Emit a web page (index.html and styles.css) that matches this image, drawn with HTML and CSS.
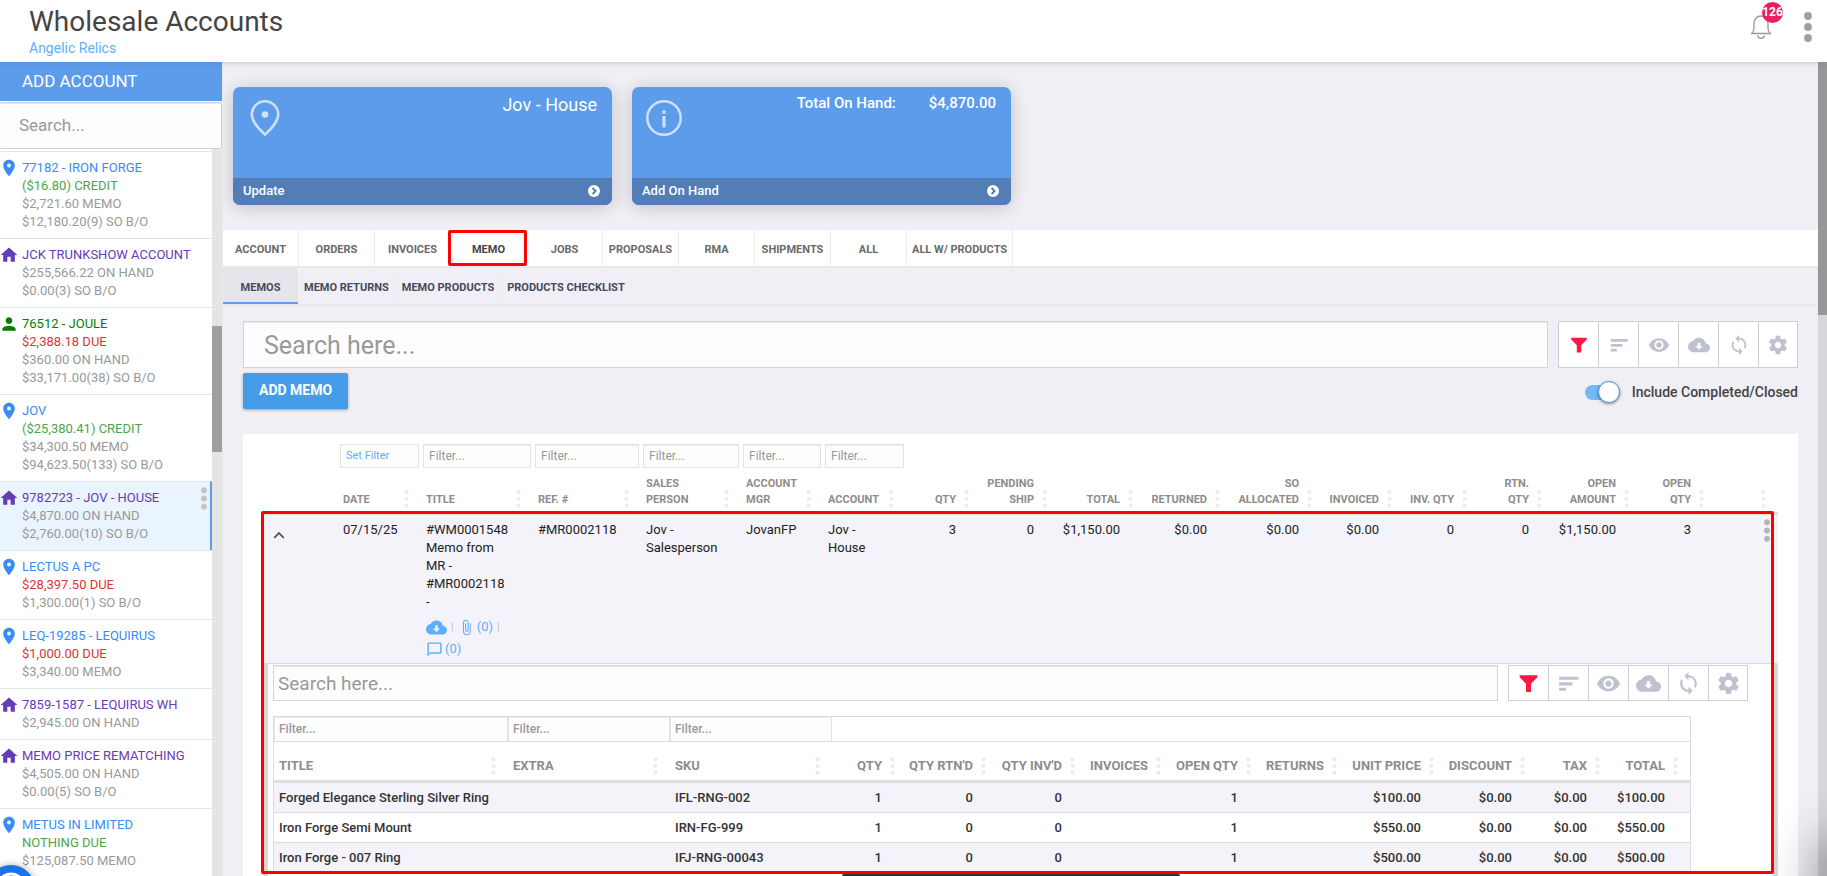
FILE: index.html
```html
<!DOCTYPE html>
<html lang="en">
<head>
<meta charset="utf-8">
<title>Wholesale Accounts</title>
<link rel="stylesheet" href="styles.css">
</head>
<body>
<svg class="sprite" aria-hidden="true">
  <symbol id="place" viewBox="0 0 24 24"><path fill-rule="evenodd" d="M12 2C8.13 2 5 5.13 5 9c0 5.25 7 13 7 13s7-7.75 7-13c0-3.87-3.13-7-7-7zm0 9.3a2.3 2.3 0 1 1 0-4.600 2.300 2.300 0 0 1 0 4.600z"/></symbol>
  <symbol id="home" viewBox="0 0 24 24"><path d="M10 20v-6h4v6h5v-8h3L12 3 2 12h3v8z"/></symbol>
  <symbol id="person" viewBox="0 0 24 24"><path d="M12 12c2.210 0 4-1.790 4-4s-1.790-4-4-4-4 1.790-4 4 1.790 4 4 4zm0 2c-2.670 0-8 1.340-8 4v2h16v-2c0-2.660-5.330-4-8-4z"/></symbol>
  <symbol id="cloud" viewBox="0 0 24 24"><path fill-rule="evenodd" d="M19.350 10.040C18.670 6.590 15.640 4 12 4 9.110 4 6.600 5.640 5.350 8.040 2.340 8.360 0 10.910 0 14c0 3.310 2.690 6 6 6h13c2.760 0 5-2.240 5-5 0-2.640-2.050-4.780-4.650-4.960zM16 13l-4 4-4-4h2.600V9.500h2.800V13z"/></symbol>
  <symbol id="eye" viewBox="0 0 24 24"><path fill-rule="evenodd" d="M12 4.500C7 4.500 2.730 7.610 1 12c1.730 4.390 6 7.500 11 7.500s9.270-3.110 11-7.500c-1.730-4.390-6-7.500-11-7.500zM12 17c-2.760 0-5-2.240-5-5s2.240-5 5-5 5 2.240 5 5-2.240 5-5 5zm0-8c-1.660 0-3 1.340-3 3s1.340 3 3 3 3-1.340 3-3-1.340-3-3-3z"/></symbol>
  <symbol id="sync" viewBox="0 0 24 24"><path d="M12 4V1L8 5l4 4V6c3.310 0 6 2.690 6 6 0 1.010-.25 1.970-.7 2.800l1.460 1.460C19.540 15.030 20 13.570 20 12c0-4.420-3.580-8-8-8zm0 14c-3.310 0-6-2.690-6-6 0-1.010.25-1.970.7-2.800L5.240 7.740C4.460 8.970 4 10.430 4 12c0 4.420 3.580 8 8 8v3l4-4-4-4v3z"/></symbol>
  <symbol id="gear" viewBox="0 0 24 24"><path fill-rule="evenodd" d="M19.430 12.980c.04-.32.07-.64.07-.98s-.03-.66-.07-.98l2.110-1.650c.19-.15.24-.42.12-.64l-2-3.460c-.12-.22-.39-.3-.61-.22l-2.490 1c-.52-.4-1.080-.73-1.690-.98l-.38-2.650C14.460 2.180 14.250 2 14 2h-4c-.25 0-.46.18-.49.42l-.38 2.650c-.61.25-1.170.59-1.690.98l-2.490-1c-.23-.09-.49 0-.61.22l-2 3.460c-.13.22-.07.49.12.64l2.110 1.650c-.04.32-.07.65-.07.98s.03.66.07.98l-2.110 1.650c-.19.15-.24.42-.12.64l2 3.460c.12.22.39.3.61.22l2.490-1c.52.4 1.080.73 1.690.98l.38 2.650c.03.24.24.42.49.42h4c.25 0 .46-.18.49-.42l.38-2.650c.61-.25 1.170-.59 1.690-.98l2.490 1c.23.09.49 0 .61-.22l2-3.460c.12-.22.07-.49-.12-.64l-2.110-1.650zM12 15.500c-1.930 0-3.500-1.570-3.500-3.500s1.570-3.500 3.500-3.500 3.500 1.570 3.500 3.500-1.570 3.500-3.500 3.500z"/></symbol>
  <symbol id="funnel" viewBox="0 0 24 24"><path d="M3.500 4h17v2L14.400 12.200V20.200H9.600v-8L3.500 6z"/></symbol>
  <symbol id="sort" viewBox="0 0 24 24"><path d="M3 5.500h18.500v3H3zM3 10.800h12.700v3H3zM3 16h6.500v3H3z"/></symbol>
  <symbol id="clip" viewBox="0 0 24 24"><path d="M16.500 6v11.500c0 2.210-1.790 4-4 4s-4-1.790-4-4V5c0-1.380 1.120-2.500 2.500-2.500s2.500 1.120 2.500 2.500v10.500c0 .55-.45 1-1 1s-1-.45-1-1V6H10v9.500c0 1.380 1.120 2.500 2.500 2.500s2.500-1.120 2.500-2.500V5c0-2.210-1.790-4-4-4S7 2.790 7 5v12.500c0 3.040 2.460 5.500 5.500 5.500s5.500-2.460 5.500-5.500V6h-1.500z"/></symbol>
  <symbol id="chat" viewBox="0 0 24 24"><path fill-rule="evenodd" d="M20 2H4c-1.100 0-2 .9-2 2v18l4-4h14c1.100 0 2-.9 2-2V4c0-1.100-.9-2-2-2zm0 14H6l-2 2V4h16v12z"/></symbol>
  <symbol id="grip" viewBox="0 0 5 18"><circle cx="2.500" cy="2.300" r="2.100"/><circle cx="2.500" cy="9" r="2.100"/><circle cx="2.500" cy="15.700" r="2.100"/></symbol>
  <symbol id="kebab" viewBox="0 0 8 30"><circle cx="4" cy="4" r="3.900"/><circle cx="4" cy="15" r="3.900"/><circle cx="4" cy="26" r="3.900"/></symbol>
  <symbol id="next" viewBox="0 0 12 12"><circle cx="6" cy="6" r="6" fill="#fff"/><path d="M4.600 3l3 3-3 3" fill="none" stroke="#527db5" stroke-width="1.900"/></symbol>
</svg>

<header class="topbar">
  <div>
    <h1 class="page-title">Wholesale Accounts</h1>
    <a class="company" href="#">Angelic Relics</a>
  </div>
  <div class="top-actions">
    <button class="bell" aria-label="Notifications">
      <svg width="22" height="26" viewBox="0 0 22 26" stroke="#999" stroke-width="1.300"><path d="M1 19.500h20M2 19c1.600-1.200 2-2.500 2-5V9.500C4 5 7 2 11 2s7 3 7 7.500V14c0 2.500.4 3.800 2 5M7.500 21.500c.5 1.800 1.800 2.800 3.500 2.800s3-1 3.500-2.800"/></svg>
      <span class="badge">126</span>
    </button>
    <button class="menu" aria-label="Menu"><svg width="8" height="30"><use href="#kebab"/></svg></button>
  </div>
</header>

<div class="layout">
  <aside class="sidebar">
    <button class="add-account">ADD ACCOUNT</button>
    <input class="account-search" type="text" placeholder="Search..." aria-label="Search accounts">
    <div class="scroller">
      <ul class="accounts">
        <li class="loc"><svg><use href="#place"/></svg><div><a href="#">77182 - IRON FORGE</a><span class="ok">($16.80) CREDIT</span><span>$2,721.60 MEMO</span><span>$12,180.20(9) SO B/O</span></div></li>
        <li class="house"><svg><use href="#home"/></svg><div><a href="#">JCK TRUNKSHOW ACCOUNT</a><span>$255,566.22 ON HAND</span><span>$0.00(3) SO B/O</span></div></li>
        <li class="user"><svg><use href="#person"/></svg><div><a href="#">76512 - JOULE</a><span class="due">$2,388.18 DUE</span><span>$360.00 ON HAND</span><span>$33,171.00(38) SO B/O</span></div></li>
        <li class="loc"><svg><use href="#place"/></svg><div><a href="#">JOV</a><span class="ok">($25,380.41) CREDIT</span><span>$34,300.50 MEMO</span><span>$94,623.50(133) SO B/O</span></div></li>
        <li class="house selected"><svg><use href="#home"/></svg><div><a href="#">9782723 - JOV - HOUSE</a><span>$4,870.00 ON HAND</span><span>$2,760.00(10) SO B/O</span></div><button class="item-menu" aria-label="Account menu"><svg width="6" height="23"><use href="#kebab"/></svg></button></li>
        <li class="loc"><svg><use href="#place"/></svg><div><a href="#">LECTUS A PC</a><span class="due">$28,397.50 DUE</span><span>$1,300.00(1) SO B/O</span></div></li>
        <li class="loc"><svg><use href="#place"/></svg><div><a href="#">LEQ-19285 - LEQUIRUS</a><span class="due">$1,000.00 DUE</span><span>$3,340.00 MEMO</span></div></li>
        <li class="house"><svg><use href="#home"/></svg><div><a href="#">7859-1587 - LEQUIRUS WH</a><span>$2,945.00 ON HAND</span></div></li>
        <li class="house"><svg><use href="#home"/></svg><div><a href="#">MEMO PRICE REMATCHING</a><span>$4,505.00 ON HAND</span><span>$0.00(5) SO B/O</span></div></li>
        <li class="loc"><svg><use href="#place"/></svg><div><a href="#">METUS IN LIMITED</a><span class="ok">NOTHING DUE</span><span>$125,087.50 MEMO</span></div></li>
      </ul>
      <div class="side-track"><div class="side-thumb"></div></div>
    </div>
  </aside>

  <main class="main">
    <section class="cards">
      <article class="card">
        <div class="card-body">
          <svg width="36" height="36" viewBox="0 0 36 36" stroke="#cfe1f9" stroke-width="2.500"><path d="M18 34.600C12 29 4.800 22 4.800 14.500a13.200 13.200 0 0 1 26.400 0C31.200 22 24 29 18 34.600z"/><circle cx="18" cy="14.500" r="3.300" fill="#cfe1f9" stroke="none"/></svg>
          <strong class="card-name">Jov - House</strong>
        </div>
        <button class="card-foot">Update<svg width="12" height="12"><use href="#next"/></svg></button>
      </article>
      <article class="card">
        <div class="card-body">
          <svg width="36" height="36" viewBox="0 0 36 36" stroke="#cfe1f9" stroke-width="2.500"><circle cx="18" cy="18" r="16.700"/><path d="M18 10.500v3.200M18 16v11.500" stroke-width="3.200"/></svg>
          <div class="card-total"><span>Total On Hand:</span><span>$4,870.00</span></div>
        </div>
        <button class="card-foot">Add On Hand<svg width="12" height="12"><use href="#next"/></svg></button>
      </article>
    </section>

    <nav class="tabs">
      <a href="#">ACCOUNT</a><a href="#">ORDERS</a><a href="#">INVOICES</a><a href="#" class="active">MEMO</a><a href="#">JOBS</a><a href="#">PROPOSALS</a><a href="#">RMA</a><a href="#">SHIPMENTS</a><a href="#">ALL</a><a href="#">ALL W/ PRODUCTS</a>
    </nav>
    <nav class="subtabs">
      <a href="#" class="active">MEMOS</a><a href="#">MEMO RETURNS</a><a href="#">MEMO PRODUCTS</a><a href="#">PRODUCTS CHECKLIST</a>
    </nav>

    <section class="content">
      <div class="search-row">
        <input class="search" type="text" placeholder="Search here..." aria-label="Search memos">
        <div class="tools">
          <button class="hot" aria-label="Filter"><svg><use href="#funnel"/></svg></button><button aria-label="Sort"><svg><use href="#sort"/></svg></button><button aria-label="Columns"><svg><use href="#eye"/></svg></button><button aria-label="Download"><svg><use href="#cloud"/></svg></button><button aria-label="Refresh"><svg><use href="#sync"/></svg></button><button aria-label="Settings"><svg><use href="#gear"/></svg></button>
        </div>
      </div>
      <div class="action-row">
        <button class="add-memo">ADD MEMO</button>
        <label class="toggle"><input type="checkbox" role="switch" checked><span>Include Completed/Closed</span></label>
      </div>

      <div class="sheet">
        <table class="memos">
          <colgroup><col class="w75"><col class="w83"><col class="w112"><col class="w108"><col class="w100"><col class="w82"><col class="w83"><col class="w75"><col class="w78"><col class="w86"><col class="w87"><col class="w92"><col class="w80"><col class="w75"><col class="w75"><col class="w87"><col class="w75"><col class="w62"></colgroup>
          <thead>
            <tr class="filters">
              <td></td><td><button class="set-filter">Set Filter</button></td>
              <td><input type="text" placeholder="Filter..." aria-label="Filter title"></td>
              <td><input type="text" placeholder="Filter..." aria-label="Filter reference"></td>
              <td><input type="text" placeholder="Filter..." aria-label="Filter sales person"></td>
              <td><input type="text" placeholder="Filter..." aria-label="Filter account manager"></td>
              <td><input type="text" placeholder="Filter..." aria-label="Filter account"></td>
              <td colspan="11"></td>
            </tr>
            <tr class="heads">
              <th></th>
              <th><div><span>DATE</span><svg><use href="#grip"/></svg></div></th>
              <th><div><span>TITLE</span><svg><use href="#grip"/></svg></div></th>
              <th><div><span>REF. #</span><svg><use href="#grip"/></svg></div></th>
              <th><div><span>SALES<br>PERSON</span><svg><use href="#grip"/></svg></div></th>
              <th><div><span>ACCOUNT<br>MGR</span><svg><use href="#grip"/></svg></div></th>
              <th><div><span>ACCOUNT</span><svg><use href="#grip"/></svg></div></th>
              <th class="num"><div><span>QTY</span><svg><use href="#grip"/></svg></div></th>
              <th class="num"><div><span>PENDING<br>SHIP</span><svg><use href="#grip"/></svg></div></th>
              <th class="num"><div><span>TOTAL</span><svg><use href="#grip"/></svg></div></th>
              <th class="num"><div><span>RETURNED</span><svg><use href="#grip"/></svg></div></th>
              <th class="num"><div><span>SO<br>ALLOCATED</span><svg><use href="#grip"/></svg></div></th>
              <th class="num"><div><span>INVOICED</span><svg><use href="#grip"/></svg></div></th>
              <th class="num"><div><span>INV. QTY</span><svg><use href="#grip"/></svg></div></th>
              <th class="num"><div><span>RTN.<br>QTY</span><svg><use href="#grip"/></svg></div></th>
              <th class="num"><div><span>OPEN<br>AMOUNT</span><svg><use href="#grip"/></svg></div></th>
              <th class="num"><div><span>OPEN<br>QTY</span><svg><use href="#grip"/></svg></div></th>
              <th class="num"><div><span></span><svg><use href="#grip"/></svg></div></th>
            </tr>
          </thead>
          <tbody>
            <tr class="memo">
              <td class="fold"><button aria-label="Collapse row"><svg width="12" height="8" viewBox="0 0 12 8"><path d="M1.200 6.800L6 2l4.800 4.800" fill="none" stroke="#555" stroke-width="1.800"/></svg></button></td>
              <td>07/15/25</td>
              <td>#WM0001548 Memo from MR - #MR0002118<br>-
                <div class="links"><a href="#" aria-label="Download"><svg class="cloud"><use href="#cloud"/></svg></a><i>|</i><a href="#"><svg><use href="#clip"/></svg>(0)</a><i>|</i></div>
                <div class="links second"><a href="#"><svg><use href="#chat"/></svg>(0)</a></div>
              </td>
              <td>#MR0002118</td><td>Jov - Salesperson</td><td>JovanFP</td><td>Jov -<br>House</td>
              <td class="num">3</td><td class="num">0</td><td class="num">$1,150.00</td><td class="num">$0.00</td><td class="num">$0.00</td><td class="num">$0.00</td><td class="num">0</td><td class="num">0</td><td class="num">$1,150.00</td><td class="num">3</td>
              <td class="row-menu"><button aria-label="Row menu"><svg width="6" height="23"><use href="#kebab"/></svg></button></td>
            </tr>
            <tr>
              <td class="detail" colspan="18">
                <div class="search-row inner">
                  <input class="search" type="text" placeholder="Search here..." aria-label="Search products">
                  <div class="tools">
                    <button class="hot" aria-label="Filter"><svg><use href="#funnel"/></svg></button><button aria-label="Sort"><svg><use href="#sort"/></svg></button><button aria-label="Columns"><svg><use href="#eye"/></svg></button><button aria-label="Download"><svg><use href="#cloud"/></svg></button><button aria-label="Refresh"><svg><use href="#sync"/></svg></button><button aria-label="Settings"><svg><use href="#gear"/></svg></button>
                  </div>
                </div>
                <table class="products">
                  <colgroup><col class="w234"><col class="w162"><col class="w162"><col class="w75"><col class="w91"><col class="w89"><col class="w86"><col class="w90"><col class="w86"><col class="w97"><col class="w91"><col class="w75"><col class="w78"></colgroup>
                  <thead>
                    <tr class="filters">
                      <td><input type="text" placeholder="Filter..." aria-label="Filter title"></td>
                      <td><input type="text" placeholder="Filter..." aria-label="Filter extra"></td>
                      <td><input type="text" placeholder="Filter..." aria-label="Filter SKU"></td>
                      <td colspan="10"></td>
                    </tr>
                    <tr class="heads">
                      <th><div><span>TITLE</span><svg><use href="#grip"/></svg></div></th>
                      <th><div><span>EXTRA</span><svg><use href="#grip"/></svg></div></th>
                      <th><div><span>SKU</span><svg><use href="#grip"/></svg></div></th>
                      <th class="num"><div><span>QTY</span><svg><use href="#grip"/></svg></div></th>
                      <th class="num"><div><span>QTY RTN'D</span><svg><use href="#grip"/></svg></div></th>
                      <th class="num"><div><span>QTY INV'D</span><svg><use href="#grip"/></svg></div></th>
                      <th class="num"><div><span>INVOICES</span><svg><use href="#grip"/></svg></div></th>
                      <th class="num"><div><span>OPEN QTY</span><svg><use href="#grip"/></svg></div></th>
                      <th class="num"><div><span>RETURNS</span><svg><use href="#grip"/></svg></div></th>
                      <th class="num"><div><span>UNIT PRICE</span><svg><use href="#grip"/></svg></div></th>
                      <th class="num"><div><span>DISCOUNT</span><svg><use href="#grip"/></svg></div></th>
                      <th class="num"><div><span>TAX</span><svg><use href="#grip"/></svg></div></th>
                      <th class="num"><div><span>TOTAL</span><svg><use href="#grip"/></svg></div></th>
                    </tr>
                  </thead>
                  <tbody>
                    <tr><td>Forged Elegance Sterling Silver Ring</td><td></td><td>IFL-RNG-002</td><td class="num">1</td><td class="num">0</td><td class="num">0</td><td></td><td class="num">1</td><td></td><td class="num">$100.00</td><td class="num">$0.00</td><td class="num">$0.00</td><td class="num">$100.00</td></tr>
                    <tr><td>Iron Forge Semi Mount</td><td></td><td>IRN-FG-999</td><td class="num">1</td><td class="num">0</td><td class="num">0</td><td></td><td class="num">1</td><td></td><td class="num">$550.00</td><td class="num">$0.00</td><td class="num">$0.00</td><td class="num">$550.00</td></tr>
                    <tr><td>Iron Forge - 007 Ring</td><td></td><td>IFJ-RNG-00043</td><td class="num">1</td><td class="num">0</td><td class="num">0</td><td></td><td class="num">1</td><td></td><td class="num">$500.00</td><td class="num">$0.00</td><td class="num">$0.00</td><td class="num">$500.00</td></tr>
                  </tbody>
                </table>
              </td>
            </tr>
          </tbody>
        </table>
      </div>
    </section>
    <div class="callout"></div>
  </main>
  <div class="main-track"><div class="main-thumb"></div></div>
</div>

<div class="snackbar"></div>
<div class="help"><svg width="48" height="48" viewBox="0 0 48 48" stroke="#fff" stroke-width="3"><path d="M14 22v-6a10 7 0 0 1 20 0v6"/></svg></div>
<div class="corner-glow"></div>
</body>
</html>
```
FILE: styles.css
```css
* { box-sizing: border-box; }
body {
  margin: 0;
  height: 100vh;
  overflow: hidden;
  display: flex;
  flex-direction: column;
  background: #f0eff5;
  color: #222;
  font: 13px/18px Roboto, "Liberation Sans", sans-serif;
}
button, input { font: inherit; color: inherit; margin: 0; border-radius: 0; }
button { background: none; border: 0; padding: 0; cursor: pointer; }
a { text-decoration: none; color: inherit; }
svg { display: block; flex: none; fill: currentColor; }
.sprite { position: absolute; width: 0; height: 0; }

/* Top bar */
.topbar {
  position: relative;
  z-index: 3;
  flex: none;
  height: 62px;
  display: flex;
  justify-content: space-between;
  padding: 5px 15px 0 29px;
  background: #fff;
  box-shadow: 0 1px 5px rgba(70, 120, 160, .3);
}
.page-title { margin: 0; font-size: 28px; line-height: 34px; font-weight: 400; color: #444; }
.company { display: block; font-size: 14px; line-height: 18px; color: #5cb0fb; }
.top-actions { display: flex; align-items: flex-start; gap: 32px; padding-top: 7px; }
.menu { color: #9f9f9f; }
.bell { position: relative; margin-top: 2px; }
.bell svg { fill: none; }
.badge {
  position: absolute;
  left: 12px;
  top: -12px;
  width: 21px;
  height: 21px;
  display: flex;
  justify-content: center;
  overflow: hidden;
  border-radius: 50%;
  background: #ec1e63;
  color: #fff;
  font-size: 12px;
  line-height: 21px;
  font-weight: 700;
}

.layout { flex: 1; min-height: 0; display: flex; }

/* Sidebar */
.sidebar { flex: none; width: 223px; display: flex; flex-direction: column; border-right: 1px solid #e6ebec; background: #fff; }
.add-account { flex: none; height: 39px; padding: 0 22px 1px; background: #5d9beb; color: #fff; font-size: 17px; text-align: left; }
.account-search {
  flex: none;
  height: 47px;
  margin-top: 1px;
  padding: 0 19px 2px;
  width: 100%;
  border: 1px solid #d0d0d0;
  border-left: 0;
  border-radius: 2px;
  background: #fdfdfd;
  box-shadow: inset 0 1px 1px #e6e6e6;
  font-size: 17px;
}
::placeholder { color: #999; opacity: 1; }
.scroller { flex: 1; min-height: 0; display: flex; overflow: hidden; }
.accounts { flex: 1; margin: 0; padding: 2px 0 0; list-style: none; }
.accounts li { display: flex; padding: 7px 0; border-top: 1px solid #dce6e9; color: #999; }
.accounts li > svg { width: 20px; height: 20px; margin: -1px 3px 0 -1px; }
.accounts li > div { flex: 1; display: flex; flex-direction: column; }
.loc svg, .loc a { color: #368cf8; }
.house > svg, .house a { color: #673ab7; }
.user svg, .user a { color: #008000; }
.ok { color: #4ca64c; }
.due { color: #d93636; }
.accounts .selected { background: #eaf4fe; border-right: 2px solid #5d9beb; }
.item-menu { align-self: flex-start; margin: -2px 3px 0 0; color: #c4c4c4; }
.side-track { flex: none; width: 10px; background: #e5e5e5; }
.side-thumb { height: 126px; margin-top: 177px; background: #9f9f9f; }

/* Main column */
.main { position: relative; flex: 1; min-width: 0; overflow: hidden; }
.main-track { flex: none; width: 9px; background: #d7d6dc; }
.main-thumb { height: 253px; background: #979797; }

.cards { display: flex; gap: 20px; padding: 25px 10px; }
.card { width: 379px; border-radius: 7px; overflow: hidden; background: #5d9beb; color: #fff; box-shadow: 0 2px 18px rgba(0, 0, 0, .2); }
.card-body { display: flex; justify-content: space-between; min-height: 91px; padding: 6px 15px 0 14px; }
.card-body svg { margin-top: 7px; fill: none; }
.card-name { font-size: 18px; line-height: 24px; font-weight: 400; }
.card-total { display: flex; gap: 33px; font-size: 15px; line-height: 20px; font-weight: 500; }
.card-foot { display: flex; width: 100%; height: 27px; align-items: center; justify-content: space-between; padding: 0 12px 2px 10px; background: #527db5; font-weight: 500; }

.tabs, .subtabs { display: flex; border-bottom: 2px solid #e9e9eb; font-size: 11px; font-weight: 700; text-align: center; }
.tabs { background: #fff; color: #6a6a6a; }
.tabs a { position: relative; min-width: 76px; padding: 0 5px; line-height: 36px; padding-top: 2px; height: 36px; border-right: 1px solid #ececec; }
.tabs .active { color: #444; }
.tabs .active::after { content: ""; position: absolute; inset: 0 -1px 0 -3px; z-index: 1; border: 3px solid #f00; border-radius: 2px; }
.subtabs { color: #434a5c; }
.subtabs a { min-width: 76px; height: 36px; padding: 2px 6px 0; line-height: 36px; border-right: 1px solid #ececf1; }
.subtabs .active { min-width: 75px; background: #e5e5eb; border-right: 0; border-bottom: 2px solid #5d9beb; }

.content { padding: 15px 20px 0; }
.search-row { display: flex; gap: 10px; height: 47px; }
.search { flex: 1; min-width: 0; padding: 1px 20px 0; border: 1px solid #d5d5d8; background: #fdfdfd; box-shadow: inset 0 1px 1px #e8e8e8; font-size: 25px; }
.tools { display: flex; background: #fff; border: 1px solid #cfcfd3; color: #bfc1d1; }
.tools button { width: 40px; display: grid; place-items: center; border-left: 1px solid #cfcfd3; }
.tools button:first-child { width: 39px; border-left: 0; }
.tools button:last-child { width: 39px; }
.tools svg { width: 22px; height: 22px; }
.tools .hot { color: #ff1744; }

.action-row { display: flex; justify-content: space-between; align-items: flex-start; padding: 5px 0 25px; }
.add-memo { height: 36px; padding: 0 16px 2px; border-radius: 2px; background: #459dea; color: #fff; font-size: 14px; font-weight: 700; box-shadow: 0 1px 3px rgba(0, 0, 0, .35); }
.toggle { display: flex; align-items: center; gap: 12px; height: 36px; padding-top: 2px; color: #444; font-size: 14px; font-weight: 500; }
.toggle input { appearance: none; display: flex; justify-content: flex-end; align-items: center; width: 35px; height: 15px; border-radius: 8px; background: #74b9f7; }
.toggle input::before { content: ""; flex: none; width: 20px; height: 20px; border: 1px solid #459dea; border-radius: 50%; background: #fff; box-shadow: 0 1px 3px rgba(0, 0, 0, .45); }

/* Memo table */
.sheet { padding: 8px 20px 20px; background: #fff; }
table { border-collapse: separate; border-spacing: 0; table-layout: fixed; }
th, td { padding: 0; text-align: left; vertical-align: top; }
th { vertical-align: bottom; color: #8d8d8d; font-weight: 700; white-space: nowrap; }
th div { display: flex; align-items: flex-end; justify-content: space-between; gap: 8px; padding: 0 12px 4px 5px; }
th svg { width: 5px; height: 18px; color: #ececec; }
.num { text-align: right; }
th.num div { justify-content: flex-end; }
.memos { width: 100%; }
.memos > thead .filters td { height: 30px; padding: 2px; }
.filters input, .set-filter { display: block; width: 100%; height: 24px; padding: 0 5px; border: 1px solid #e3e3e3; background: #fdfdfd; font-size: 12px; text-align: left; }
.filters input { box-shadow: inset 0 1px 0 #ececec; }
.set-filter { font-size: 11px; color: #5cb0fb; }
.memos > thead .heads th { height: 43px; border-bottom: 3px solid #dedede; font-size: 11px; line-height: 16px; }
.memo td { padding: 6px 25px 3px 5px; border-bottom: 1px solid #dadada; background: #f4f3f9; }
.memo td:nth-child(3) { padding-right: 20px; }
.memo td:nth-child(5), .memo td:nth-child(4) { padding-right: 10px; }
.memo .num { padding-left: 0; }
.memo .fold { padding: 11px 0 0 10px; }
.memo .row-menu { padding: 4px 8px 0 0; }
.row-menu button { display: block; margin-left: auto; color: #b5b5b5; }
.links { display: flex; align-items: center; gap: 4px; height: 22px; margin-top: 5px; color: #5cb0fb; }
.links.second { margin-top: 0; }
.links a { display: flex; align-items: center; gap: 2px; }
.links svg { width: 17px; height: 17px; }
.links .cloud { width: 21px; height: 21px; }
.links i { font-style: normal; color: #bbb; font-size: 11px; }

.detail { padding: 1px 0 20px 5px; border: solid #d7d9d9; border-width: 0 5px; }
.inner { height: 36px; margin-right: 25px; }
.inner .search { padding: 0 4px; font-size: 19px; }
.inner .tools svg { width: 25px; height: 25px; }

.products { width: calc(100% - 84px); margin-top: 15px; border: 1px solid #dcdcdc; color: #333; font-weight: 500; }
.products .filters td { height: 25px; border-bottom: 1px solid #dcdcdc; }
.products .filters input { padding: 0 4px; border-width: 0 1px 0 1px; }
.products .heads th { height: 41px; border-bottom: 3px solid #dedede; }
.products .heads div { padding-bottom: 5px; }
.products tbody td { height: 30px; padding: 6px 5px 5px; border-bottom: 1px solid #dcdcdc; white-space: nowrap; }
.products tbody .num { padding-right: 25px; }
.products tbody tr:nth-child(odd) { background: #f4f3f9; }

.w62 { width: 62px; } .w75 { width: 75px; } .w78 { width: 78px; } .w80 { width: 80px; }
.w82 { width: 82px; } .w83 { width: 83px; } .w86 { width: 86px; } .w87 { width: 87px; }
.w89 { width: 89px; } .w90 { width: 90px; } .w91 { width: 91px; } .w92 { width: 92px; }
.w97 { width: 97px; } .w100 { width: 100px; } .w108 { width: 108px; } .w112 { width: 112px; }
.w162 { width: 162px; } .w234 { width: 234px; }

/* Overlays */
.callout { position: absolute; top: 449px; right: 44px; bottom: 2px; left: 38px; border: 3px solid #f00; border-radius: 2px; pointer-events: none; }
.snackbar { position: fixed; left: 842px; bottom: 0; width: 338px; height: 2px; background: #32323e; border-radius: 2px 2px 0 0; }
.help { position: fixed; left: -13px; bottom: -37px; width: 48px; height: 48px; border-radius: 50%; background: #1a73e8; box-shadow: 0 1px 8px rgba(0, 0, 0, .4); }
.help svg { fill: none; }
.corner-glow { position: fixed; right: -30px; bottom: -30px; width: 30px; height: 60px; border-radius: 30px; box-shadow: 0 0 50px 10px rgba(0, 0, 0, .4); }
```
